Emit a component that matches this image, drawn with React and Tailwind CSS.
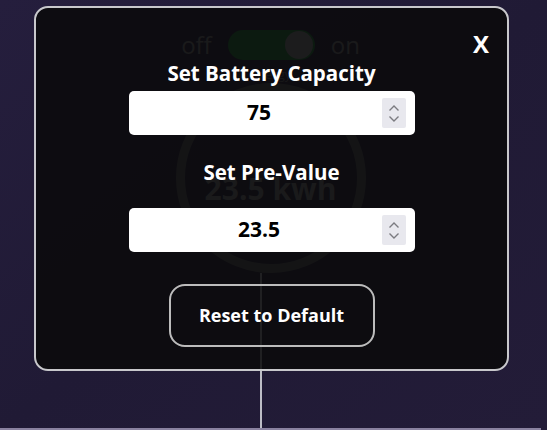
function Spinner() {
  return (
    <div className="flex h-[30px] w-[24px] flex-col items-center justify-center gap-[3px] rounded-[2px] bg-[#e8e8ee]">
      <svg width="12" height="8" viewBox="0 0 12 8" fill="none">
        <path d="M1.5 6.5 6 2l4.5 4.5" stroke="#7b7b80" strokeWidth="1.4" />
      </svg>
      <svg width="12" height="8" viewBox="0 0 12 8" fill="none">
        <path d="M1.5 1.5 6 6l4.5-4.5" stroke="#7b7b80" strokeWidth="1.4" />
      </svg>
    </div>
  );
}

function NumberField({ value }) {
  return (
    <div className="flex h-[44px] w-[286px] items-center rounded-[5px] bg-white pl-[8px] pr-[9px]">
      <span className="flex-1 text-center text-[21px] font-bold text-black">
        {value}
      </span>
      <Spinner />
    </div>
  );
}

export default function App() {
  return (
    <div
      className="relative h-[430px] w-[547px] overflow-hidden bg-gradient-to-br from-[#251e3d] via-[#201a35] to-[#231c38] text-white"
      style={{ fontFamily: '"Open Sans", "Noto Sans", sans-serif' }}
    >
      {/* page content behind the dialog */}
      <div className="flex h-full flex-col items-center pr-[6px] pt-[27px]">
        <div className="flex items-center gap-[16px]">
          <span className="text-[24px] text-[#8a8a8a]">off</span>
          <div className="flex h-[30px] w-[87px] items-center justify-end rounded-full bg-[#1c8a34] px-[2px]">
            <div className="h-[28px] w-[28px] rounded-full bg-[#9a9a9a]" />
          </div>
          <span className="text-[24px] text-[#8a8a8a]">on</span>
        </div>
        <span className="mt-[2px] text-[13px] leading-[18px] text-[#777]">energy</span>
        <div className="flex h-[190px] w-[190px] items-center justify-center rounded-full border-[9px] border-[#5e5e5e]">
          <span className="mt-[22px] text-[30px] font-bold leading-tight text-[#8a8a8a]">
            23.5 kwh
          </span>
        </div>
        <div className="mr-[20px] w-[2px] flex-1 bg-[#bdbdc6]" />
        <div className="h-[2px] w-full bg-[#8a82a0]" />
      </div>

      {/* dialog */}
      <div className="absolute left-[34px] top-[6px] flex h-[365px] w-[475px] flex-col items-center rounded-[14px] border-2 border-[#c8c8cc] bg-[#0a0a0b]/[0.88] pt-[52px]">
        <button className="absolute right-[18px] top-[24px] text-[24px] font-bold leading-none text-white">
          X
        </button>
        <h2 className="text-[20.5px] font-bold leading-[26px]">Set Battery Capacity</h2>
        <div className="mt-[5px]">
          <NumberField value="75" />
        </div>
        <h2 className="mt-[24px] text-[20.5px] font-bold leading-[26px]">Set Pre-Value</h2>
        <div className="mt-[23px]">
          <NumberField value="23.5" />
        </div>
        <button className="mt-[32px] h-[63px] w-[206px] rounded-[16px] border-2 border-[#bcbcbc] text-[18px] font-bold">
          Reset to Default
        </button>
      </div>
    </div>
  );
}
